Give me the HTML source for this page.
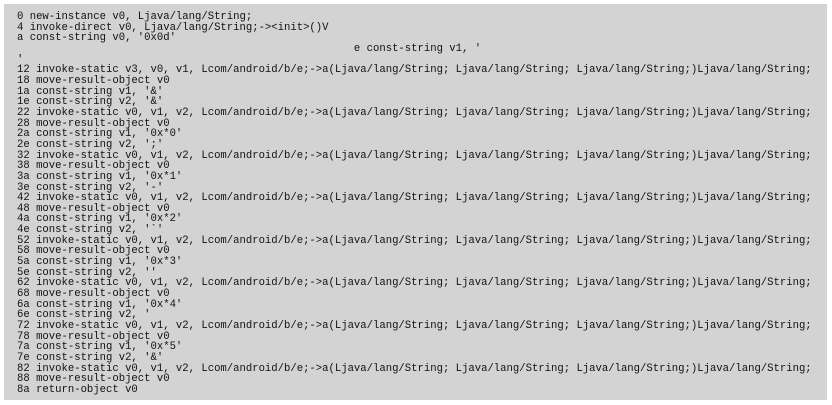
<!DOCTYPE html>
<html><head><style>
html,body{margin:0;padding:0;background:#fff;width:832px;height:405px;overflow:hidden}
.box{position:absolute;left:4px;top:4px;width:823px;height:396px;background:#d3d3d3}
pre{position:absolute;left:17px;top:12px;margin:0;font-family:"Liberation Mono",monospace;font-size:10.6px;line-height:10.65px;color:#111;white-space:pre}
</style></head><body>
<div class="box"></div>
<pre>0 new-instance v0, Ljava/lang/String;
4 invoke-direct v0, Ljava/lang/String;-&gt;&lt;init&gt;()V
a const-string v0, '0x0d'
                                                     e const-string v1, '
'
12 invoke-static v3, v0, v1, Lcom/android/b/e;-&gt;a(Ljava/lang/String; Ljava/lang/String; Ljava/lang/String;)Ljava/lang/String;
18 move-result-object v0
1a const-string v1, '&amp;'
1e const-string v2, '&amp;'
22 invoke-static v0, v1, v2, Lcom/android/b/e;-&gt;a(Ljava/lang/String; Ljava/lang/String; Ljava/lang/String;)Ljava/lang/String;
28 move-result-object v0
2a const-string v1, '0x*0'
2e const-string v2, ';'
32 invoke-static v0, v1, v2, Lcom/android/b/e;-&gt;a(Ljava/lang/String; Ljava/lang/String; Ljava/lang/String;)Ljava/lang/String;
38 move-result-object v0
3a const-string v1, '0x*1'
3e const-string v2, '-'
42 invoke-static v0, v1, v2, Lcom/android/b/e;-&gt;a(Ljava/lang/String; Ljava/lang/String; Ljava/lang/String;)Ljava/lang/String;
48 move-result-object v0
4a const-string v1, '0x*2'
4e const-string v2, '`'
52 invoke-static v0, v1, v2, Lcom/android/b/e;-&gt;a(Ljava/lang/String; Ljava/lang/String; Ljava/lang/String;)Ljava/lang/String;
58 move-result-object v0
5a const-string v1, '0x*3'
5e const-string v2, ''
62 invoke-static v0, v1, v2, Lcom/android/b/e;-&gt;a(Ljava/lang/String; Ljava/lang/String; Ljava/lang/String;)Ljava/lang/String;
68 move-result-object v0
6a const-string v1, '0x*4'
6e const-string v2, '
72 invoke-static v0, v1, v2, Lcom/android/b/e;-&gt;a(Ljava/lang/String; Ljava/lang/String; Ljava/lang/String;)Ljava/lang/String;
78 move-result-object v0
7a const-string v1, '0x*5'
7e const-string v2, '&amp;'
82 invoke-static v0, v1, v2, Lcom/android/b/e;-&gt;a(Ljava/lang/String; Ljava/lang/String; Ljava/lang/String;)Ljava/lang/String;
88 move-result-object v0
8a return-object v0</pre>
</body></html>
